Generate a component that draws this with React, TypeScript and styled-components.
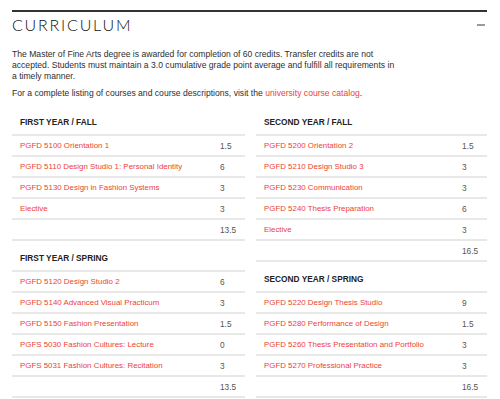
import React from 'react';
import styled, { createGlobalStyle } from 'styled-components';

const GlobalStyle = createGlobalStyle`
    html, body {
        margin: 0;
        padding: 0;
        background: #FFFFFF;
    }
    body {
        font-family: "Liberation Sans", Arial, sans-serif;
        color: #333333;
    }
`

const Page = styled.div`
    padding: 10px 13px 0 12px;
    width: 475px;
`

const TopRule = styled.div`
    border-top: 2px solid #333333;
`

const TitleRow = styled.div`
    display: flex;
    justify-content: space-between;
    align-items: center;
    height: 26px;
`

const Title = styled.h2`
    margin: 0;
    font-family: Lato, "DejaVu Sans", sans-serif;
    font-weight: 300;
    font-size: 16px;
    line-height: 20px;
    letter-spacing: 1.8px;
    color: #111111;
`

const Collapse = styled.span`
    display: block;
    width: 8px;
    height: 2px;
    margin-right: 2px;
    background: #9A9A9A;
`

const Intro = styled.p`
    margin: ${(p: { $top: number }) => p.$top}px 0 0;
    max-width: 386px;
    font-size: 8.6px;
    line-height: 11px;
    color: #2E2E2E;
`

const Link = styled.a`
    color: #EE3F33;
    text-decoration: none;
`

const Columns = styled.div`
    display: grid;
    grid-template-columns: 233px 231px;
    column-gap: 11px;
    margin-top: 6px;
    align-items: start;
`

const Column = styled.div`
    display: flex;
    flex-direction: column;
`

const TermTable = styled.div`
    border-bottom: 2px solid #E8E8E8;
`

const TermTitle = styled.h3`
    margin: 0;
    padding: 12px 8px 6px;
    font-size: 8.3px;
    line-height: 11px;
    font-weight: 700;
    color: #222222;
`

const Row = styled.div`
    display: grid;
    grid-template-columns: 1fr 25px;
    height: 19px;
    align-items: center;
    padding-left: 8px;
    border-top: 2px solid #E8E8E8;
    font-size: 7.9px;
`

const Course = styled.span`
    color: #EE3F33;
`

const Credits = styled.span`
    color: #555555;
    font-size: 8.3px;
`

type Course = [string, string];

interface Term {
    title: string;
    courses: Course[];
    total: string;
}

const leftTerms: Term[] = [
    {
        title: 'FIRST YEAR / FALL',
        courses: [
            ['PGFD 5100 Orientation 1', '1.5'],
            ['PGFD 5110 Design Studio 1: Personal Identity', '6'],
            ['PGFD 5130 Design in Fashion Systems', '3'],
            ['Elective', '3'],
        ],
        total: '13.5',
    },
    {
        title: 'FIRST YEAR / SPRING',
        courses: [
            ['PGFD 5120 Design Studio 2', '6'],
            ['PGFD 5140 Advanced Visual Practicum', '3'],
            ['PGFD 5150 Fashion Presentation', '1.5'],
            ['PGFS 5030 Fashion Cultures: Lecture', '0'],
            ['PGFS 5031 Fashion Cultures: Recitation', '3'],
        ],
        total: '13.5',
    },
];

const rightTerms: Term[] = [
    {
        title: 'SECOND YEAR / FALL',
        courses: [
            ['PGFD 5200 Orientation 2', '1.5'],
            ['PGFD 5210 Design Studio 3', '3'],
            ['PGFD 5230 Communication', '3'],
            ['PGFD 5240 Thesis Preparation', '6'],
            ['Elective', '3'],
        ],
        total: '16.5',
    },
    {
        title: 'SECOND YEAR / SPRING',
        courses: [
            ['PGFD 5220 Design Thesis Studio', '9'],
            ['PGFD 5280 Performance of Design', '1.5'],
            ['PGFD 5260 Thesis Presentation and Portfolio', '3'],
            ['PGFD 5270 Professional Practice', '3'],
        ],
        total: '16.5',
    },
];

const TermBlock = ({ term }: { term: Term }) => (
    <TermTable>
        <TermTitle>{term.title}</TermTitle>
        {term.courses.map(([name, credits]) => (
            <Row key={name}>
                <Course>{name}</Course>
                <Credits>{credits}</Credits>
            </Row>
        ))}
        <Row>
            <span />
            <Credits>{term.total}</Credits>
        </Row>
    </TermTable>
);

const App = () => {
    return (
        <Page>
            <GlobalStyle />
            <TopRule />
            <TitleRow>
                <Title>CURRICULUM</Title>
                <Collapse />
            </TitleRow>
            <Intro $top={11}>
                The Master of Fine Arts degree is awarded for completion of 60 credits. Transfer credits are not
                accepted. Students must maintain a 3.0 cumulative grade point average and fulfill all requirements in
                a timely manner.
            </Intro>
            <Intro $top={6}>
                For a complete listing of courses and course descriptions, visit the{' '}
                <Link href="#">university course catalog</Link>.
            </Intro>
            <Columns>
                <Column>
                    {leftTerms.map((t) => <TermBlock key={t.title} term={t} />)}
                </Column>
                <Column>
                    {rightTerms.map((t) => <TermBlock key={t.title} term={t} />)}
                </Column>
            </Columns>
        </Page>
    );
};

export default App;
